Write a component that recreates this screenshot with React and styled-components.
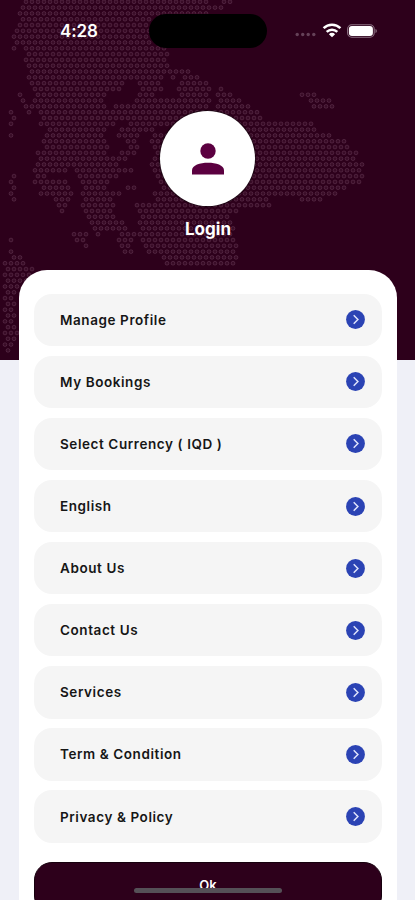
import React from 'react';
import styled, { createGlobalStyle } from 'styled-components';

const menuItems = [
  'Manage Profile',
  'My Bookings',
  'Select Currency ( IQD )',
  'English',
  'About Us',
  'Contact Us',
  'Services',
  'Term & Condition',
  'Privacy & Policy',
];

// dotted world map, every row is a list of [from, to] ranges in px
const mapRows = [
  [[26, 205], [225, 233]],
  [[23, 224]],
  [[20, 205]],
  [[20, 150]],
  [[18, 150]],
  [[17, 150]],
  [[14, 150]],
  [[17, 150]],
  [[14, 14], [26, 163]],
  [[29, 169]],
  [[26, 168]],
  [[29, 169]],
  [[33, 188]],
  [[29, 165], [173, 175], [186, 200]],
  [[33, 122], [138, 158], [166, 168], [182, 206]],
  [[36, 118], [143, 163], [180, 208], [222, 224]],
  [[20, 20], [38, 106], [138, 154], [180, 210], [219, 234], [299, 314]],
  [[23, 23], [36, 100], [134, 210], [222, 243], [309, 331]],
  [[26, 108], [115, 210], [216, 248], [312, 334]],
  [[8, 10], [29, 29], [41, 260]],
  [[12, 14], [42, 115], [120, 262]],
  [[9, 11], [42, 112], [127, 311]],
  [[46, 103], [122, 155], [240, 313]],
  [[9, 11], [45, 103], [120, 138], [152, 330]],
  [[43, 106], [125, 137], [153, 347]],
  [[43, 106], [128, 136], [154, 350]],
  [[39, 108], [120, 135], [156, 355]],
  [[40, 125], [156, 357]],
  [[38, 120], [152, 361]],
  [[36, 65], [75, 132], [153, 363]],
  [[13, 14], [36, 47], [77, 115], [155, 364]],
  [[8, 14], [36, 68], [82, 110], [157, 362]],
  [[14, 14], [42, 70], [84, 107], [125, 134], [160, 345]],
  [[12, 15], [42, 70], [82, 118], [152, 334]],
  [[13, 13], [52, 68], [82, 112], [155, 270], [303, 319]],
  [[56, 65], [81, 115], [134, 268]],
  [[60, 61], [84, 112], [137, 240]],
  [[88, 112], [140, 230]],
  [[91, 121], [140, 232]],
  [[91, 124], [143, 232]],
  [[72, 86], [98, 99], [118, 135], [140, 233]],
  [[10, 11], [75, 84], [115, 132], [143, 237]],
  [[86, 86], [118, 131], [143, 235]],
  [[10, 11], [121, 130], [146, 235]],
  [[13, 19], [165, 235]],
  [[1, 24], [50, 50], [165, 232]],
  [[5, 33]],
  [[5, 30]],
  [[5, 26]],
  [[5, 17]],
  [[8, 16]],
  [[5, 11]],
  [[7, 15]],
  [[5, 12]],
  [[8, 16]],
  [[5, 12]],
  [[7, 15]],
  [[5, 17]],
  [[8, 14]],
  [[5, 11]],
  [[8, 10]],
];

const dots = [];
mapRows.forEach((ranges, row) => {
  for (let x = row % 2 ? 5 : 2; x < 415; x += 6) {
    if (ranges.some(([from, to]) => x >= from - 1.5 && x <= to + 1.5)) {
      dots.push([x, 1.8 + row * 5.81]);
    }
  }
});

function WorldMap() {
  return (
    <MapSvg viewBox="0 0 415 360">
      {dots.map(([x, y]) => (
        <circle key={`${x}-${y}`} cx={x} cy={y} r="1.9" />
      ))}
    </MapSvg>
  );
}

function StatusBar() {
  return (
    <StatusRow>
      <Time>4:28</Time>
      <Island />
      <StatusIcons>
        <svg width="21" height="5" viewBox="0 0 21 5" fill="#654158">
          <circle cx="2.2" cy="2.5" r="1.7" />
          <circle cx="7.7" cy="2.5" r="1.7" />
          <circle cx="13.2" cy="2.5" r="1.7" />
          <circle cx="18.8" cy="2.5" r="1.7" />
        </svg>
        <WifiSvg width="20" height="15" viewBox="0 0 20 15">
          <path d="M1.6 5.2a12 12 0 0 1 16.8 0" />
          <path d="M4.7 8.8a7.6 7.6 0 0 1 10.6 0" />
          <path d="M10 14.200L6.900 11.2a4.200 4.200 0 0 1 6.200 0z" fill="#fff" stroke="none" />
        </WifiSvg>
        <svg width="31" height="14" viewBox="0 0 31 14">
          <rect x="0.6" y="0.8" width="26.6" height="12.4" rx="4.2" fill="none" stroke="#8d7284" strokeWidth="1.1" />
          <rect x="1.9" y="2" width="24" height="10" rx="3" fill="#fff" />
          <path d="M28.5 5v4c1.7-.5 1.7-3.5 0-4z" fill="#8d7284" />
        </svg>
      </StatusIcons>
    </StatusRow>
  );
}

function MenuItem({ label }) {
  return (
    <MenuRow>
      <MenuLabel>{label}</MenuLabel>
      <svg width="19" height="19" viewBox="0 0 19 19">
        <circle cx="9.5" cy="9.5" r="9.4" fill="#2b43b4" />
        <path d="M7.7 5.3l4.2 4.2-4.2 4.2" fill="none" stroke="#dfe4fb" strokeWidth="1.5" />
      </svg>
    </MenuRow>
  );
}

export default function App() {
  return (
    <>
      <GlobalStyle />
      <Screen>
        <Header>
          <WorldMap />
          <StatusBar />
          <Avatar>
            <svg width="32" height="32" viewBox="0 0 32 32" fill="#5b0040">
              <circle cx="16" cy="8" r="7.7" />
              <path d="M0 31.5v-4c0-5.300 8-7.700 16-7.700s16 2.400 16 7.700v4z" />
            </svg>
          </Avatar>
          <LoginText>Login</LoginText>
        </Header>
        <Card>
          <Menu>
            {menuItems.map((label) => (
              <MenuItem key={label} label={label} />
            ))}
          </Menu>
          <OkButton>Ok</OkButton>
        </Card>
        <HomeIndicator />
      </Screen>
    </>
  );
}

// CSS styles:

const GlobalStyle = createGlobalStyle`
  * {
    box-sizing: border-box;
  }

  body {
    margin: 0;
    font-family: Inter, 'Liberation Sans', sans-serif;
  }
`;

const Screen = styled.div`
  position: relative;
  width: 415px;
  height: 900px;
  overflow: hidden;
  background: #eff0f7;
`;

const Header = styled.div`
  position: relative;
  display: flex;
  flex-direction: column;
  align-items: center;
  height: 360px;
  background: #2d001b;
`;

const MapSvg = styled.svg`
  position: absolute;
  inset: 0;
  width: 415px;
  height: 360px;
  fill: rgba(255, 200, 240, 0.06);
  stroke: rgba(255, 205, 240, 0.13);
  stroke-width: 1;
`;

const StatusRow = styled.div`
  position: relative;
  display: grid;
  grid-template-columns: 149px 118px 148px;
  align-items: center;
  width: 100%;
  height: 62px;
`;

const Time = styled.span`
  padding-left: 60px;
  color: #fff;
  font-size: 17px;
  font-weight: 600;
  letter-spacing: -0.1px;
`;

const Island = styled.div`
  height: 34px;
  border-radius: 17px;
  background: #000;
`;

const StatusIcons = styled.div`
  display: flex;
  align-items: center;
  padding-left: 28px;

  svg:first-child {
    margin-top: 7px;
  }

  svg:last-child {
    margin-top: -1px;
    margin-left: 5px;
  }
`;

const WifiSvg = styled.svg`
  margin-left: 6px;
  margin-top: -2px;
  fill: none;
  stroke: #fff;
  stroke-width: 2.5;
`;

const Avatar = styled.div`
  position: relative;
  display: flex;
  align-items: center;
  justify-content: center;
  width: 95px;
  height: 95px;
  margin-top: 49px;
  border-radius: 50%;
  background: #fff;
  box-shadow: 0 0 1px 1px rgba(0, 0, 0, 0.5);
`;

const LoginText = styled.div`
  position: relative;
  margin-top: 12px;
  padding-left: 1px;
  color: #fff;
  font-size: 17px;
  font-weight: 700;
  line-height: 22px;
`;

const Card = styled.div`
  position: relative;
  width: 378px;
  height: 660px;
  margin: -90.5px 0 0 19px;
  padding: 24px 15px 0;
  border-radius: 28px 28px 0 0;
  background: #fff;
`;

const Menu = styled.div`
  display: flex;
  flex-direction: column;
  gap: 9.6px;
`;

const MenuRow = styled.div`
  display: flex;
  align-items: center;
  justify-content: space-between;
  height: 52.5px;
  padding: 0 17px 0 26px;
  border-radius: 18px;
  background: #f5f5f5;
`;

const MenuLabel = styled.span`
  color: #161616;
  font-size: 13.5px;
  font-weight: 600;
  letter-spacing: 0.58px;
`;

const OkButton = styled.button`
  display: block;
  width: 100%;
  height: 52px;
  margin-top: 19px;
  padding: 0 0 6px;
  border: 1px solid #16000d;
  border-radius: 18px;
  background: #2d001b;
  color: #fff;
  font-family: inherit;
  font-size: 13px;
  font-weight: 600;
`;

const HomeIndicator = styled.div`
  position: absolute;
  left: 134px;
  top: 888px;
  width: 148px;
  height: 5px;
  border-radius: 3px;
  background: #555057;
`;
